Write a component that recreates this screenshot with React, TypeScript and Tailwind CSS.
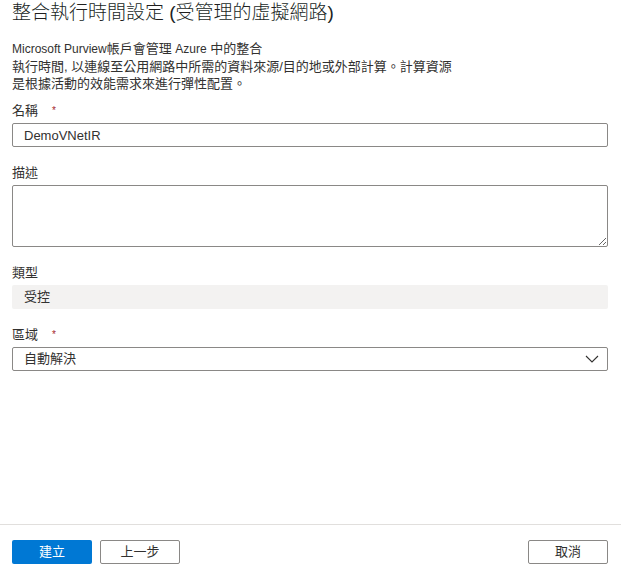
import React from 'react';

const Label: React.FC<{ text: string; required?: boolean; className?: string }> = ({ text, required, className = '' }) => (
  <div className={`h-[17px] leading-[17px] flex items-center ${className}`}>
    <span>{text}</span>
    {required && <span className="ml-[14px] text-[10px] text-[#a4262c]">*</span>}
  </div>
);

export default function App() {
  return (
    <div className="h-[571px] flex flex-col bg-white text-[#323130] text-[13px] font-['Segoe_UI','Liberation_Sans','Noto_Sans_CJK_TC',sans-serif]">
      <div className="flex-1 pl-3 pr-[13px]">
        <h1 className="text-[19px] leading-[26px] font-light text-[#201f1e]">整合執行時間設定 (受管理的虛擬網路)</h1>

        <p className="mt-[14px] leading-[17px]">
          <span className="text-[12px]">Microsoft Purview</span>帳戶會管理 <span className="text-[12px]">Azure</span> 中的整合
          <br />
          執行時間, 以連線至公用網路中所需的資料來源/目的地或外部計算。計算資源
          <br />
          是根據活動的效能需求來進行彈性配置。
        </p>

        {/* 名稱 */}
        <Label text="名稱" required className="mt-[10px]" />
        <input
          defaultValue="DemoVNetIR"
          className="mt-1 block w-full h-6 pl-[11px] border border-[#8a8886] rounded-[2px] outline-none text-[13px]"
        />

        {/* 描述 */}
        <Label text="描述" className="mt-[17px]" />
        <textarea className="mt-1 block w-full h-[62px] border border-[#8a8886] rounded-[2px] outline-none px-[11px]" />

        {/* 類型 */}
        <Label text="類型" className="mt-[17px]" />
        <div className="mt-1 h-6 flex items-center pl-3 bg-[#f3f2f1] rounded-[2px]">受控</div>

        {/* 區域 */}
        <Label text="區域" required className="mt-[17px]" />
        <div className="mt-1 h-6 flex items-center justify-between pl-[11px] pr-2 border border-[#8a8886] rounded-[2px]">
          <span>自動解決</span>
          <svg width="14" height="8" viewBox="0 0 14 8" fill="none">
            <path d="M1 1 L7 7 L13 1" stroke="#323130" strokeWidth="1.1" />
          </svg>
        </div>
      </div>

      <div className="h-[47px] border-t border-[#e1dfdd] pt-[15px] pl-3 pr-[13px] flex items-start">
        <button className="w-20 h-6 rounded-[2px] bg-[#0078d4] text-white text-[13px]">建立</button>
        <button className="ml-2 w-20 h-6 rounded-[2px] border border-[#8a8886] bg-white text-[13px]">上一步</button>
        <button className="ml-auto w-20 h-6 rounded-[2px] border border-[#8a8886] bg-white text-[13px]">取消</button>
      </div>
    </div>
  );
}
